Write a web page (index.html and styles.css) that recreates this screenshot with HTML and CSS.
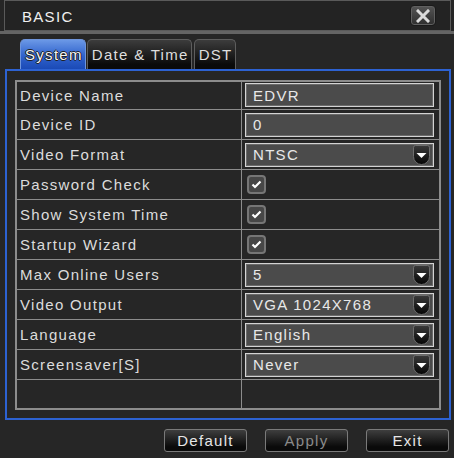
FILE: index.html
```html
<!DOCTYPE html>
<html>
<head>
<meta charset="utf-8">
<link rel="stylesheet" href="styles.css">
</head>
<body>
<div class="window">
  <div class="titlebar">
    <span class="title">BASIC</span>
    <div class="close">
      <svg width="14" height="14" viewBox="0 0 14 14"><path d="M2 2 L12 12 M12 2 L2 12" stroke="#dcdcdc" stroke-width="3" stroke-linecap="square"/></svg>
    </div>
  </div>
  <div class="sep"></div>
  <div class="tabs">
    <div class="tab active">System</div>
    <div class="tab">Date &amp; Time</div>
    <div class="tab dst">DST</div>
  </div>
  <div class="frame">
    <div class="table">
      <div class="row first">
        <div class="label">Device Name</div>
        <div class="value"><div class="field">EDVR</div></div>
      </div>
      <div class="row">
        <div class="label">Device ID</div>
        <div class="value"><div class="field">0</div></div>
      </div>
      <div class="row">
        <div class="label">Video Format</div>
        <div class="value"><div class="field select">NTSC<svg class="arrow" width="19" height="21" viewBox="0 0 19 21"><defs><linearGradient id="ag" x1="0" y1="0" x2="0" y2="1"><stop offset="0" stop-color="#3a3a3a"/><stop offset="1" stop-color="#050505"/></linearGradient></defs><path d="M1.5 2.5 Q1.5 0.5 3.5 0.5 H15.5 Q17.5 0.5 17.5 2.5 V11.5 A8 8 0 0 1 1.5 11.5 Z" fill="url(#ag)" stroke="#6e6e6e"/><polygon points="4.5,8 14.5,8 9.5,13" fill="#fff"/></svg></div></div>
      </div>
      <div class="row">
        <div class="label">Password Check</div>
        <div class="value"><svg class="check" width="19" height="19" viewBox="0 0 19 19"><rect x="1" y="1" width="17" height="17" rx="3" fill="#474747" stroke="#767676" stroke-width="2"/><polyline points="5.5,9.5 8,12 13.5,6.5" fill="none" stroke="#fff" stroke-width="2.2"/></svg></div>
      </div>
      <div class="row">
        <div class="label">Show System Time</div>
        <div class="value"><svg class="check" width="19" height="19" viewBox="0 0 19 19"><rect x="1" y="1" width="17" height="17" rx="3" fill="#474747" stroke="#767676" stroke-width="2"/><polyline points="5.5,9.5 8,12 13.5,6.5" fill="none" stroke="#fff" stroke-width="2.2"/></svg></div>
      </div>
      <div class="row">
        <div class="label">Startup Wizard</div>
        <div class="value"><svg class="check" width="19" height="19" viewBox="0 0 19 19"><rect x="1" y="1" width="17" height="17" rx="3" fill="#474747" stroke="#767676" stroke-width="2"/><polyline points="5.5,9.5 8,12 13.5,6.5" fill="none" stroke="#fff" stroke-width="2.2"/></svg></div>
      </div>
      <div class="row">
        <div class="label">Max Online Users</div>
        <div class="value"><div class="field select">5<svg class="arrow" width="19" height="21" viewBox="0 0 19 21"><path d="M1.5 2.5 Q1.5 0.5 3.5 0.5 H15.5 Q17.5 0.5 17.5 2.5 V11.5 A8 8 0 0 1 1.5 11.5 Z" fill="url(#ag)" stroke="#6e6e6e"/><polygon points="4.5,8 14.5,8 9.5,13" fill="#fff"/></svg></div></div>
      </div>
      <div class="row">
        <div class="label">Video Output</div>
        <div class="value"><div class="field select">VGA 1024X768<svg class="arrow" width="19" height="21" viewBox="0 0 19 21"><path d="M1.5 2.5 Q1.5 0.5 3.5 0.5 H15.5 Q17.5 0.5 17.5 2.5 V11.5 A8 8 0 0 1 1.5 11.5 Z" fill="url(#ag)" stroke="#6e6e6e"/><polygon points="4.5,8 14.5,8 9.5,13" fill="#fff"/></svg></div></div>
      </div>
      <div class="row">
        <div class="label">Language</div>
        <div class="value"><div class="field select">English<svg class="arrow" width="19" height="21" viewBox="0 0 19 21"><path d="M1.5 2.5 Q1.5 0.5 3.5 0.5 H15.5 Q17.5 0.5 17.5 2.5 V11.5 A8 8 0 0 1 1.5 11.5 Z" fill="url(#ag)" stroke="#6e6e6e"/><polygon points="4.5,8 14.5,8 9.5,13" fill="#fff"/></svg></div></div>
      </div>
      <div class="row">
        <div class="label">Screensaver[S]</div>
        <div class="value"><div class="field select">Never<svg class="arrow" width="19" height="21" viewBox="0 0 19 21"><path d="M1.5 2.5 Q1.5 0.5 3.5 0.5 H15.5 Q17.5 0.5 17.5 2.5 V11.5 A8 8 0 0 1 1.5 11.5 Z" fill="url(#ag)" stroke="#6e6e6e"/><polygon points="4.5,8 14.5,8 9.5,13" fill="#fff"/></svg></div></div>
      </div>
      <div class="row last">
        <div class="label"></div>
        <div class="value"></div>
      </div>
    </div>
  </div>
  <div class="actions">
    <div class="btn">Default</div>
    <div class="btn disabled">Apply</div>
    <div class="btn">Exit</div>
  </div>
</div>
</body>
</html>
```

FILE: styles.css
```css
* { box-sizing: border-box; }

body {
  margin: 0;
  background: #262626;
  font-family: "Liberation Sans", Arial, sans-serif;
  font-size: 15px;
  letter-spacing: 1.3px;
  color: #dedede;
  width: 454px;
  height: 458px;
  overflow: hidden;
}

.window {
  width: 454px;
  height: 458px;
  background: #262626;
}

.titlebar {
  margin-left: 4px;
  width: 447px;
  height: 31px;
  border: 1px solid #5a5a5a;
  background: #232323;
  display: flex;
  align-items: center;
  justify-content: space-between;
  padding: 0 14px 0 17px;
}

.title {
  color: #f0f0f0;
  padding-top: 1px;
}

.close {
  width: 26px;
  height: 21px;
  border: 1px solid #1a1a1a;
  border-radius: 4px;
  background: linear-gradient(#555555, #2e2e2e);
  box-shadow: inset 0 0 0 1px #606060;
  display: flex;
  align-items: center;
  justify-content: center;
}

.sep {
  height: 3px;
  background: #646464;
}

.tabs {
  display: flex;
  padding-left: 20px;
  margin-top: 5px;
  height: 30px;
  gap: 1px;
}

.tab {
  height: 30px;
  padding: 0 2px 0 4px;
  border: 1px solid #5e5e5e;
  border-bottom: none;
  border-radius: 5px 5px 0 0;
  background: linear-gradient(#3c3c3c, #0a0a0a 85%);
  display: flex;
  align-items: center;
  color: #dedede;
}

.tab.dst {
  margin-left: 1px;
}

.tab.active {
  border-color: #6f95dc;
  background: linear-gradient(#6b98e6, #2f62cc 55%, #1b4ab6);
  color: #f4f4f4;
  text-shadow: 1px 0 0 #222, -1px 0 0 #222, 0 1px 0 #222, 0 -1px 0 #222;
}

.frame {
  margin-left: 5px;
  width: 446px;
  height: 351px;
  border: 2px solid #2d62d2;
  padding: 9px 8px 0 8px;
}

.table {
  border: 2px solid #8c8c8c;
  height: 330px;
}

.row {
  display: flex;
  height: 30px;
  border-bottom: 1px solid #8c8c8c;
}

.row.first { height: 28px; }
.row.last { height: 28px; border-bottom: none; }

.label {
  width: 225px;
  border-right: 1px solid #8c8c8c;
  padding-left: 3px;
  display: flex;
  align-items: center;
  color: #dcdcdc;
}

.value {
  flex: 1;
  display: flex;
  align-items: center;
  padding-left: 3px;
}

.field {
  width: 189px;
  height: 24px;
  border: 1px solid #d4d4d4;
  box-shadow: inset 0 0 0 1px #6a6a6a;
  background: #4b4b4b;
  display: flex;
  align-items: center;
  justify-content: space-between;
  padding: 0 2px 0 7px;
  color: #e8e8e8;
}

.first .field { margin-top: -1px; }

.arrow {
  display: block;
  margin-top: 1px;
}

.check {
  display: block;
  margin-left: 2px;
}

.actions {
  display: flex;
  justify-content: flex-end;
  gap: 18px;
  margin-top: 9px;
  padding-right: 5px;
}

.btn {
  width: 83px;
  height: 23px;
  border: 1px solid #7a7a7a;
  border-radius: 3px;
  background: linear-gradient(#3e3e3e, #0a0a0a 80%);
  display: flex;
  align-items: center;
  justify-content: center;
  color: #e6e6e6;
}

.btn.disabled {
  color: #8a8a8a;
}
```
